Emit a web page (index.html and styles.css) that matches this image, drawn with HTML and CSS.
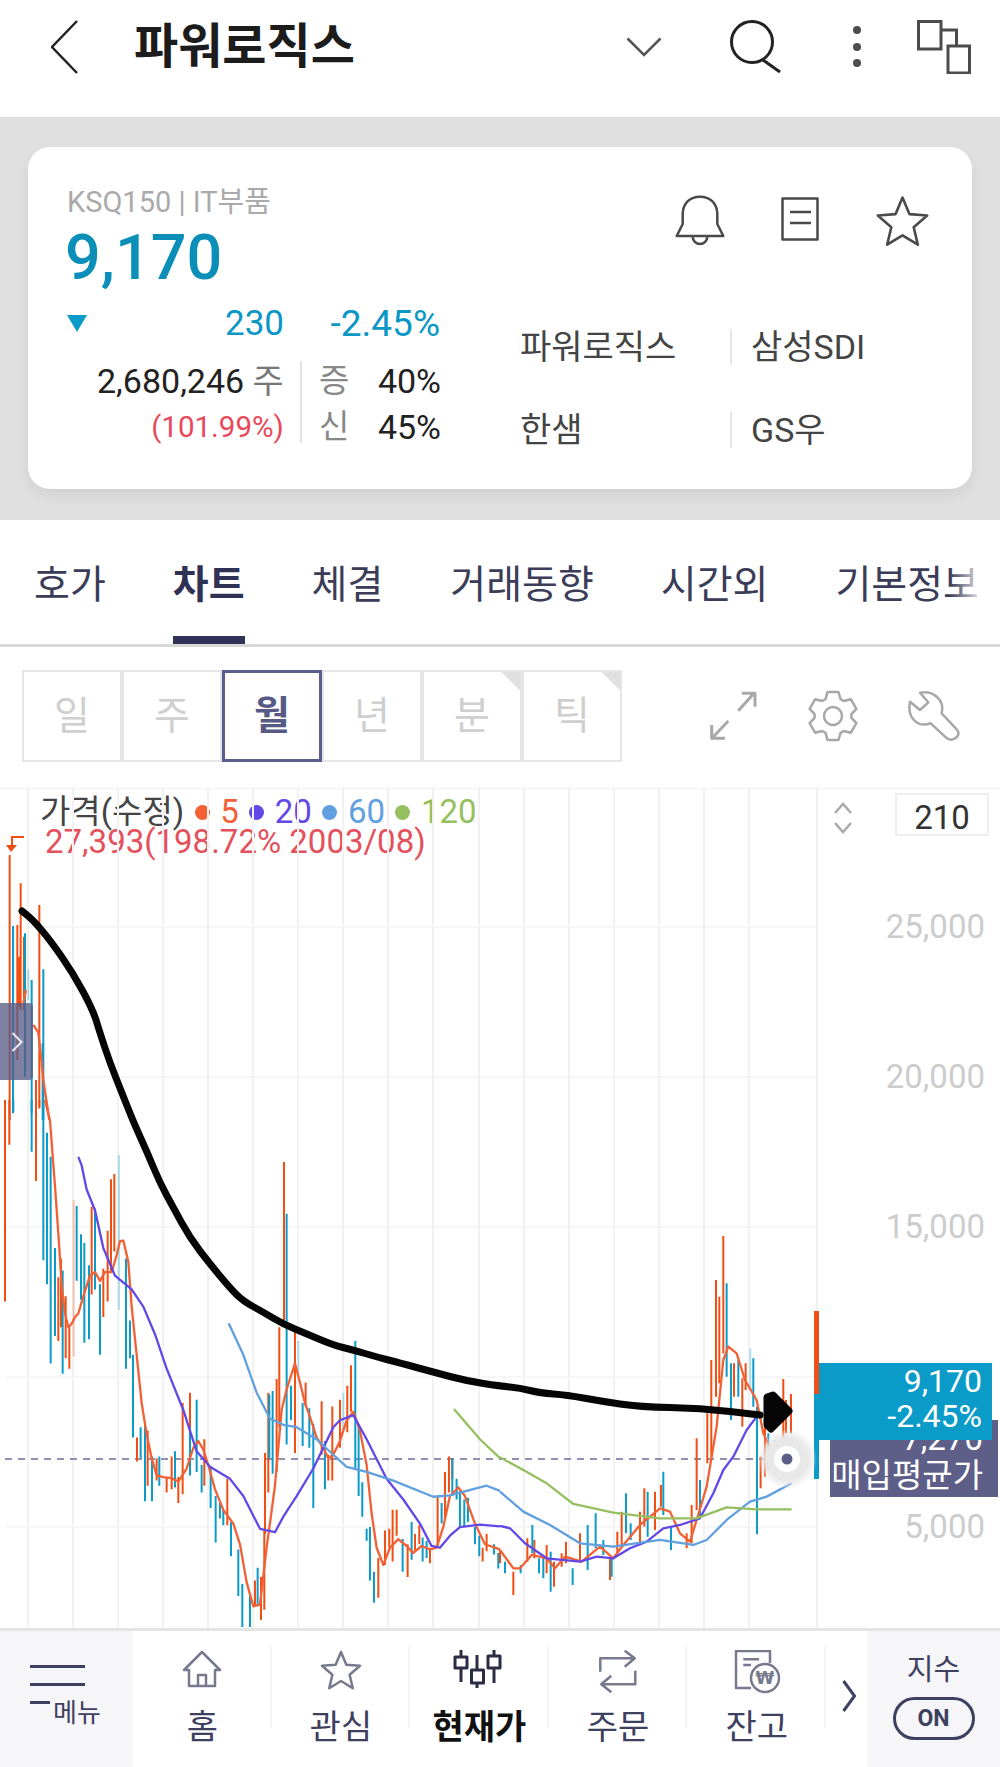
FILE: index.html
```html
<!doctype html>
<html lang="ko">
<head>
<meta charset="utf-8">
<title>파워로직스</title>
<link rel="stylesheet" href="styles.css">
</head>
<body>
<header class="top">
	<svg class="back" width="27" height="54" viewBox="0 0 27 54"><path d="M26 1L1 27L26 53"/></svg>
	<h1 class="title">파워로직스</h1>
	<svg class="ico-down" width="36" height="20" viewBox="0 0 36 20"><path d="M1.500 1.500L18 18L34.500 1.500"/></svg>
	<svg class="ico-search" width="52" height="54" viewBox="0 0 52 54"><circle cx="22" cy="22" r="20.500"/><path d="M33 40L50 52"/></svg>
	<svg class="ico-dots" width="10" height="44" viewBox="0 0 10 44"><circle cx="5" cy="5" r="4"/><circle cx="5" cy="22" r="4"/><circle cx="5" cy="38" r="4"/></svg>
	<svg class="ico-windows" width="54" height="54" viewBox="0 0 54 54"><path d="M1.500 1.500H24V29H1.500ZM24 10H39.500V26M31 26H52.500V53H31Z"/></svg>
</header>

<section class="band">
	<div class="card">
		<div class="quote">
			<div class="market">KSQ150 | IT부품</div>
			<div class="price">9,170</div>
			<div class="change">
				<span class="tri"></span>
				<span class="diff">230</span>
				<span class="pct">-2.45%</span>
			</div>
			<div class="detail">
				<div class="vol">
					<div class="vol-num">2,680,246 <em>주</em></div>
					<div class="vol-rate">(101.99%)</div>
				</div>
				<div class="margin">
					<div><em>증</em><span>40%</span></div>
					<div><em>신</em><span>45%</span></div>
				</div>
			</div>
		</div>
		<div class="side">
			<div class="actions">
				<svg class="bell" width="60" height="60" viewBox="0 0 60 60"><path d="M6.700 46L12.700 34V23.300C13.300 13 20 6.700 30 6.700S46.700 13 47.300 23.300V34L53.300 46ZM22.700 46.700a7.300 7.300 0 0 0 14.600 0"/></svg>
				<svg class="memo" width="38" height="44" viewBox="0 0 38 44"><path d="M1.500 1.500H36.500V42.500H1.500ZM9 15H30M9 26H30"/></svg>
				<svg class="fav" width="55" height="52" viewBox="9 0 42 40"><polygon points="30,2 35.300,14.700 49,15.800 38.600,24.800 41.800,38.200 30,31 18.200,38.200 21.400,24.800 11,15.800 24.700,14.700"/></svg>
			</div>
			<div class="links">
				<a>파워로직스</a><a>삼성SDI</a>
				<a>한샘</a><a>GS우</a>
			</div>
		</div>
	</div>
</section>

<nav class="tabs">
	<a>호가</a>
	<a class="on">차트</a>
	<a>체결</a>
	<a>거래동향</a>
	<a>시간외</a>
	<a>기본정보</a>
</nav>

<div class="tools">
	<div class="periods">
		<a>일</a>
		<a>주</a>
		<a class="on">월</a>
		<a>년</a>
		<a class="more">분</a>
		<a class="more">틱</a>
	</div>
	<svg class="ico-expand" width="50" height="50" viewBox="0 0 50 50"><path d="M28.300 20.700L43.300 4M31.700 3.300H45V16.700M18.300 31L3.300 46.700M1.700 35V48.300H15"/></svg>
	<svg class="ico-gear" width="56" height="56" viewBox="0 0 56 56"><path d="M20.500 11.100L22.500 4.100H33.500L35.500 11.100L38.900 13L45.900 11.300L51.400 20.800L46.400 26.100V29.900L51.400 35.200L45.900 44.700L38.900 43L35.500 44.900L33.500 51.900H22.500L20.500 44.900L17.100 43L10.100 44.700L4.600 35.200L9.600 29.900V26.100L4.600 20.800L10.100 11.300L17.100 13Z"/><circle cx="28" cy="28" r="9"/></svg>
	<svg class="ico-wrench" width="56" height="56" viewBox="0 0 56 56"><path d="M14 4.700C27.300 2 39 12 35.700 25.300L50.700 41.300C54 45.300 52.300 48.700 49 50.300C45.700 52.700 42.300 52 39 48.700L24.700 35.300C10.700 40.300 .7 28.700 4 13.700L14 22L22.300 14.300Z"/></svg>
</div>

<section class="chart">
	<div class="legend">
		<div class="legend-row">
			<span class="name">가격(수정)</span>
			<i class="dot d5"></i><span class="c5">5</span>
			<i class="dot d20"></i><span class="c20">20</span>
			<i class="dot d60"></i><span class="c60">60</span>
			<i class="dot d120"></i><span class="c120">120</span>
		</div>
		<div class="high">27,393(198.72% 2003/08)</div>
	</div>

	<svg class="plot" width="1000" height="841" viewBox="0 787 1000 841">
		<defs>
			<radialGradient id="halo"><stop offset=".7" stop-color="#e8e8e8"/><stop offset="1" stop-color="#e8e8e8" stop-opacity="0"/></radialGradient>
		</defs>
		<path class="grid-h" d="M0 788.500H1000M6 927H817M6 1077H817M6 1227H817M6 1377H817M6 1527H817"/>
		<path class="grid-v" d="M28 787V1628M73 787V1628M118 787V1628M163 787V1628M208 787V1628M253 787V1628M298 787V1628M343 787V1628M388 787V1628M433 787V1628M479 787V1628M524 787V1628M569 787V1628M614 787V1628M659 787V1628M704 787V1628M749 787V1628M817 787V1628"/>
		<path class="avg-line" d="M5 1459H790"/>

		<!-- 2003~ -->
		<g transform="translate(0 850) scale(.3333)">
			<path class="up" d="M29 15V810M62 100V480M52 225V630M72 260V480M58 320V470M118 165V770M108 690V810M15 760V810M75 420V470"/>
			<path class="down" d="M39 228V790M75 250V680M95 390V790M130 358V810M128 580V810"/>
			<path class="down faint" d="M85 358V450"/>
			<path class="ma ma5" d="M78 420L70 460M100 525L115 548L122 610L130 690L148 810"/>
		</g>

		<g transform="translate(0 1100) scale(.3333 .3444)">
			<path class="up" d="M15 0V585M28 0V130M108 0V235M118 0V25M165 430V640M175 515V700M183 460V660M197 570V750M208 660V780M275 310V565M310 490V630M323 380V585M333 230V500M343 215V440M411 980V1050M443 960V1120M470 1040V1105M500 1095V1140M515 1035V1130M535 1095V1170M548 880V1145M570 850V1060M613 985V1120M682 1100V1235M795 1025V1260M793 1250V1480M805 850V1140M830 810V1080M838 660V950M852 180V640M885 670V1025M917 820V890M965 875V1030M985 1030V1105M997 890V1105M1020 870V1010M1042 830V965M1053 770V905M1135 1330V1445M1155 1250V1350M1168 1245V1300M1178 1190V1340M1190 1190V1265M1223 1290V1385M1245 1260V1310M1258 1235V1290M1290 1300V1345M1313 1150V1295M1335 1080V1215M1347 1035V1140M1357 1040V1100M1448 1300V1340M1460 1260V1310M765 1395V1470M750 1440V1530M783 1385V1510"/>
			<path class="down" d="M40 0V35M95 0V150M130 0V465M141 95V535M152 165V765M165 430V685M188 495V795M230 308V525M243 390V580M253 415V705M267 480V695M285 315V550M300 535V740M378 460V780M390 640V750M399 740V980M422 950V1040M435 935V1165M456 1035V1165M478 1035V1120M525 1020V1125M570 950V1090M590 870V1080M605 1060V1140M632 1065V1185M647 1150V1285M660 1170V1215M670 1190V1235M693 1225V1325M715 1305V1440M727 1405V1530M750 1440V1530M773 1358V1470M808 855V1040M818 845V1085M860 330V820M860 575V1000M873 830V930M908 880V1005M928 895V1010M940 940V1185M975 990V1130M1066 700V1070M1076 950V1150M1087 1110V1210M1100 1245V1280M1110 1240V1395M1122 1370V1460M1208 1275V1370M1235 1225V1335M1268 1270V1340M1280 1280V1330M1325 1170V1230M1357 1040V1150M1370 1100V1160M1380 1135V1240M1393 1160V1240M1404 1155V1225M1425 1240V1290M1438 1265V1325M1482 1290V1320M1495 1315V1360"/>
			<path class="down faint" d="M357 160V610M895 700V800M1030 850V960"/>
			<path class="up faint" d="M221 290V745"/>
			<path class="ma ma5" d="M135 0L150 60L165 250L178 430L185 540L195 620L205 660L215 650L225 630L235 620L250 570L270 510L285 500L300 525L315 500L335 500L350 450L360 410L370 408L385 470L395 600L410 740L425 880L440 970L455 1040L470 1090L490 1095L515 1098L535 1108L560 1070L580 1010L595 990L610 1015L625 1060L645 1130L670 1190L700 1230L720 1290L740 1400L760 1470L780 1465L800 1300L825 1120L845 900L860 840L885 765L900 820L915 880L930 920L950 980L970 1010L985 1040L1000 1030L1020 990L1040 930L1060 905L1080 960L1100 1060L1115 1200L1130 1300L1150 1350L1170 1300L1195 1275L1220 1295L1240 1315L1265 1295L1290 1305L1310 1300L1330 1240L1350 1150L1375 1125L1395 1150L1425 1230L1455 1290L1500 1305"/>
			<path class="ma ma20" d="M235 165L245 190L260 260L285 320L310 430L345 510L395 550L430 600L465 680L500 780L550 900L590 1020L630 1065L690 1100L730 1150L780 1245L825 1255L850 1210L890 1150L940 1070L1000 950L1020 930L1060 915L1100 985L1160 1100L1210 1160L1260 1230L1295 1295L1320 1300L1350 1265L1380 1240L1440 1233L1500 1238"/>
			<path class="ma ma60" d="M686 648L730 740L770 850L810 925L850 943L890 950L950 985L1000 1030L1040 1065L1100 1080L1180 1105L1300 1152L1350 1148L1400 1135L1460 1120L1500 1135"/>
			<path class="ma ma120" d="M1362 897L1440 985L1500 1040"/>
		</g>

		<g transform="translate(500 1200) scale(.3333)">
			<path class="up" d="M0 1050V1090M40 1115V1185M82 1015V1085M103 1020V1075M140 1035V1120M162 1085V1160M185 1060V1100M198 1025V1090M240 1000V1085M330 1075V1140M352 995V1060M365 935V1040M420 935V1030M433 865V980M465 875V990M483 855V920M560 1000V1045M575 915V1030M590 715V930M622 640V790M634 480V770M648 240V590M658 290V550M670 108V460M702 490V590M727 535V680M737 490V570M782 770V865M795 660V830M850 537V830M873 582V700M858 600V700"/>
			<path class="down" d="M15 1085V1120M62 1095V1120M97 975V1060M117 1075V1120M130 1070V1135M152 1055V1175M218 1105V1155M263 975V1110M287 940V1045M310 1020V1065M335 1075V1130M378 880V1000M392 970V1020M443 875V1010M490 815V945M513 980V1050M600 840V950M680 250V530M693 490V660M715 480V590M760 475V620M771 620V1003M805 700V810M825 720V790M840 790V840"/>
			<path class="down faint" d="M751 445V570"/>
			<path class="ma ma5" d="M0 1050L40 1105L60 1105L95 1065L140 1075L165 1105L195 1070L245 1085L300 1040L340 1075L370 1035L420 975L480 925L510 935L540 1000L570 1025L590 960L620 860L650 680L670 480L685 440L710 460L735 540L770 600L790 700L830 790L875 715"/>
			<path class="ma ma20" d="M0 978L30 985L75 1030L140 1075L240 1085L290 1070L340 1075L390 1045L440 1025L490 985L540 975L600 955L640 880L670 810L700 770L740 690L770 650"/>
			<path class="ma ma60" d="M0 875L70 935L150 975L240 1030L340 1040L480 1020L580 1035L620 1020L680 960L750 905L800 890L875 850"/>
			<path class="ma ma120" d="M0 772L70 810L140 850L220 912L340 938L480 955L590 955L680 922L770 928L875 928"/>
		</g>

		<!-- pen mark over the chart -->
		<path class="pen" d="M22 911L27.500 915.500Q33 920 41.500 930Q50 940 61.500 956.500Q73 973 83 991.500Q93 1010 96.500 1021.500Q100 1033 105 1048Q110 1063 116 1078Q122 1093 127.500 1107Q133 1121 140 1136.500Q147 1152 153.500 1167.500Q160 1183 166.500 1195Q173 1207 181.500 1222.500Q190 1238 200 1251Q210 1264 220 1276Q230 1288 236.500 1294.500Q243 1301 253 1306.500Q263 1312 273 1318Q283 1324 295 1329Q307 1334 320 1339.500Q333 1345 343 1347.500Q353 1350 365 1353.500Q377 1357 388.500 1360Q400 1363 416.500 1367.500Q433 1372 450 1376.500Q467 1381 483.500 1383.500Q500 1386 510 1387Q520 1388 530 1390.500Q540 1393 553.500 1394Q567 1395 583.500 1398Q600 1401 620 1404Q640 1407 670 1407.500Q700 1408 730 1411.500L760 1415"/>
		<path class="pen-head" d="M767 1397L773 1395L789 1411L771 1429L767 1425Z"/>

		<path class="flag" d="M24 837H12V846"/>
		<path class="flag-tip" d="M6 845H17L11 852Z"/>
		<path class="bar-up" d="M814 1311h5v83h-5z"/>
		<path class="bar-down" d="M814 1394h5v85h-5z"/>
		<circle cx="787" cy="1459" r="30" fill="url(#halo)"/>
		<circle cx="787" cy="1459" r="13" fill="#fff"/>
		<circle cx="787" cy="1459" r="5.500" fill="#5e5f88"/>
		<path class="scroll-arrows" d="M835 813l8-9 8 9M835 823l8 9 8-9"/>
	</svg>

	<div class="drawer"><svg width="12" height="20" viewBox="0 0 12 20"><path d="M1.500 1L10.500 10L1.500 19"/></svg></div>
	<div class="zoom-box">210</div>
	<div class="axis">
		<div>25,000</div>
		<div>20,000</div>
		<div>15,000</div>
		<div></div>
		<div>5,000</div>
	</div>
	<div class="tag-avg">7,270<br>매입평균가</div>
	<div class="tag-now">9,170<br>-2.45%</div>
</section>

<footer class="nav">
	<div class="nav-menu">
		<i class="line"></i>
		<i class="line"></i>
		<div class="menu-row"><i class="line short"></i><span>메뉴</span></div>
	</div>
	<div class="nav-main">
		<a class="item">
			<svg width="60" height="50" viewBox="0 0 60 50"><path d="M17 36V20H12L30 2L48 20H43V36ZM26 36V25H34V36"/></svg>
			<span>홈</span>
		</a>
		<a class="item">
			<svg width="60" height="50" viewBox="0 0 60 50"><polygon points="30,2 35.300,14.700 49,15.800 38.600,24.800 41.800,38.200 30,31 18.200,38.200 21.400,24.800 11,15.800 24.700,14.700"/></svg>
			<span>관심</span>
		</a>
		<a class="item on">
			<svg width="60" height="50" viewBox="0 0 60 50"><path d="M12 0V7M12 18V32M6 7H18V18H6ZM28 5V20M28 33V38M22.500 20H34.500V33H22.500ZM45 0V6M45 18V33M39 6H51V18H39Z"/></svg>
			<span>현재가</span>
		</a>
		<a class="item">
			<svg width="60" height="50" viewBox="0 0 60 50"><path d="M12.300 21.700V8.300H46.700M36.700 .7L46.700 8.300L36.700 16.700M47.300 20.700V34.300H13.300M23.300 25.700L13.300 34.300L23.300 42.300"/></svg>
			<span>주문</span>
		</a>
		<a class="item">
			<svg width="60" height="50" viewBox="0 0 60 50"><path d="M43 13V1H9V38H24M16.300 9.300H32M16.300 15H24"/><circle cx="38" cy="28" r="14"/><text class="won" x="38" y="34">₩</text></svg>
			<span>잔고</span>
		</a>
		<svg class="nav-next" width="14" height="32" viewBox="0 0 14 32"><path d="M1.500 1L12.500 16L1.500 31"/></svg>
	</div>
	<div class="nav-index">
		<div class="index-name">지수</div>
		<div class="pill">ON</div>
	</div>
</footer>
</body>
</html>
```

FILE: styles.css
```css
*{box-sizing:border-box;margin:0;padding:0;}
html,body{width:1000px;height:1767px;overflow:hidden;background:#fff;}
body{font-family:Roboto,"Noto Sans CJK KR",sans-serif;color:#222;}
em,i{font-style:normal;}
svg{display:block;fill:none;}

/* top bar */
.top{height:117px;padding:0 29px 23px 51px;display:flex;align-items:center;}
.top svg{flex:none;}
.back path{stroke:#222;stroke-width:2.5;}
.title{font-size:48px;line-height:60px;font-weight:700;color:#1c1c1c;margin-left:56px;white-space:nowrap;}
.ico-down{margin-left:auto;}
.ico-down path{stroke:#555;stroke-width:2.5;}
.ico-search{margin-left:68px;}
.ico-search circle,.ico-search path{stroke:#222;stroke-width:3;}
.ico-dots{margin-left:70px;fill:#4c4c4c;}
.ico-windows{margin-left:55px;}
.ico-windows path{stroke:#4c4c4c;stroke-width:3;}

/* quote card */
.band{height:403px;background:#e0e0e0;padding:30px 28px 31px;}
.card{height:342px;background:#fff;border-radius:22px;box-shadow:0 6px 14px rgba(0,0,0,.07);display:flex;}
.quote{width:413px;padding:38px 0 0 39px;flex:none;}
.market{font-size:29px;line-height:34px;color:#aaa;}
.price{font-size:63px;line-height:70px;font-weight:500;color:#0b8fb8;margin:4px 0 0 -2px;}
.change{display:flex;align-items:center;height:40px;margin-top:10px;color:#0b97c6;}
.tri{width:0;height:0;border-style:solid;border-width:17px 10.500px 0;border-color:#0b9bc9 transparent transparent;flex:none;}
.diff{width:197px;text-align:right;font-size:35px;}
.pct{width:156px;text-align:right;font-size:37px;}
.detail{display:flex;margin-top:18px;}
.vol{width:236px;padding-right:16px;text-align:right;border-right:2px solid #e2e2e2;height:82px;}
.vol-num{font-size:34px;line-height:40px;color:#222;white-space:nowrap;}
.vol-num em{color:#777;}
.vol-rate{font-size:29.500px;line-height:52px;color:#e8485a;}
.margin{font-size:34px;padding-left:17px;}
.margin div{display:flex;line-height:52px;}
.margin div:first-child{line-height:40px;}
.margin em{width:59px;color:#888;font-size:33px;}
.side{flex:1;}
.actions{display:flex;padding:43px 0 0 229px;height:103px;}
.actions path,.actions polygon{stroke:#4a4a4a;stroke-width:2.500;stroke-linejoin:round;}
.actions .fav polygon{stroke-width:2;}
.memo{margin:7px 0 0 51px;flex:none;}
.fav{margin:5px 0 0 56px;flex:none;}
.bell{flex:none;}
.links{display:grid;grid-template-columns:212px 1fr;grid-auto-rows:36px;row-gap:47px;margin:79px 0 0 79px;font-size:34px;line-height:36px;color:#444;}
.links a:nth-child(odd){border-right:2px solid #e6e6e6;}
.links a:nth-child(even){padding-left:19px;}

/* tabs */
.tabs{height:127px;border-bottom:3px solid #d9d9d9;padding-left:34px;display:flex;gap:67px;position:relative;overflow:hidden;white-space:nowrap;font-size:39px;line-height:130px;color:#3b3d58;}
.tabs a{flex:none;height:124px;}
.tabs .on{font-weight:700;color:#2f3254;border-bottom:8px solid #2f3357;}
.tabs::after{content:"";position:absolute;right:0;top:0;width:50px;height:120px;background:linear-gradient(to right,rgba(255,255,255,0),#fff 70%);}

/* period buttons */
.tools{height:140px;padding:23px 0 0 22px;display:flex;}
.tools svg{flex:none;}
.periods{display:flex;height:92px;flex:none;}
.periods a{width:100px;border:2px solid #e6e6e6;text-align:center;font-size:39px;line-height:88px;color:#cfcfcf;}
.periods .on{border:3px solid #5b5f8a;font-weight:700;color:#565a85;line-height:86px;}
.periods .more{background:linear-gradient(225deg,#e0e0e0 13px,transparent 13px);}
.ico-expand,.ico-gear,.ico-wrench{margin-top:20px;stroke:#a8a8a8;stroke-width:3;stroke-linejoin:round;}
.ico-expand{margin-left:88px;}
.ico-gear{margin:18px 0 0 45px;stroke-width:2.500;}
.ico-wrench{margin:18px 0 0 45px;stroke-width:2.500;}

/* chart */
.chart{height:841px;position:relative;overflow:hidden;}
.legend{position:absolute;left:40px;top:7px;font-size:33px;line-height:32px;white-space:nowrap;}
.legend-row{display:flex;align-items:center;height:32px;padding-top:4px;}
.name{color:#444;}
.dot{width:15px;height:15px;border-radius:50%;margin:0 10.500px;}
.d5{background:#f26035;}
.d20{background:#6248e6;}
.d60{background:#60a0e0;}
.d120{background:#96bf60;}
.c5{color:#f26035;}
.c20{color:#6248e6;}
.c60{color:#60a0e0;}
.c120{color:#96bf60;}
.high{color:#e4505c;margin-left:5px;height:32px;}
.plot{position:absolute;left:0;top:0;}
.plot path{vector-effect:non-scaling-stroke;}
.grid-h{stroke:#f6f6f6;stroke-width:2;}
.grid-v{stroke:#f2f2f2;stroke-width:2;}
.avg-line{stroke:#6c6c9c;stroke-width:1.500;stroke-dasharray:7 6;}
.up{stroke:#f04e12;stroke-width:2;}
.down{stroke:#0b9bc9;stroke-width:2;}
.faint{opacity:.3;}
.ma{stroke-width:2.300;stroke-linejoin:round;}
.ma5{stroke:#f26035;}
.ma20{stroke:#6248e6;}
.ma60{stroke:#60a0e0;}
.ma120{stroke:#96bf60;}
.pen{stroke:#050505;stroke-width:7;stroke-linecap:round;stroke-linejoin:round;}
.pen-head{fill:#050505;stroke:#050505;stroke-width:7;stroke-linejoin:round;}
.flag{stroke:#f04e12;stroke-width:2;}
.flag-tip{fill:#f04e12;}
.bar-up{fill:#f04e12;}
.bar-down{fill:#0b9bc9;}
.scroll-arrows{stroke:#aaa;stroke-width:2.500;}
.drawer{position:absolute;left:0;top:216px;width:33px;height:77px;border-radius:0 4px 4px 0;background:rgba(90,93,135,.78);display:flex;align-items:center;justify-content:center;}
.drawer path{stroke:#e8e8ee;stroke-width:2;}
.zoom-box{position:absolute;left:895px;top:6px;width:94px;height:43px;border:2px solid #eee;text-align:center;font-size:33px;line-height:45px;color:#333;}
.axis{position:absolute;right:15px;top:65px;text-align:right;font-size:33px;line-height:150px;color:#ccc;}
.axis div{height:150px;}
.tag-avg{position:absolute;left:830px;top:633px;width:168px;height:77px;padding-right:15px;background:#5e5f88;color:#fff;text-align:right;font-size:33px;line-height:37px;white-space:nowrap;}
.tag-now{position:absolute;left:819px;top:576px;width:173px;height:77px;padding:1px 10px 0 0;background:#0b9bc9;color:#fff;text-align:right;font-size:32px;line-height:35px;}

/* bottom menu */
.nav{height:139px;border-top:3px solid #e5e5e5;display:flex;}
.nav-menu{width:133px;background:#f6f6f8;padding:34px 0 0 30px;}
.line{display:block;width:55px;height:3px;background:#3e4060;margin-bottom:15px;}
.menu-row{display:flex;}
.line.short{width:20px;}
.menu-row span{font-size:26px;line-height:24px;color:#3e4060;margin-left:3px;}
.nav-main{flex:1;display:flex;}
.item{width:138.600px;position:relative;flex:none;display:flex;flex-direction:column;align-items:center;padding-top:19px;font-size:34px;color:#3e4060;}
.item::after{content:"";position:absolute;right:0;top:16px;width:2px;height:81px;background:#f3f3f3;}
.item span{line-height:44px;margin-top:5px;white-space:nowrap;}
.item svg path,.item svg polygon,.item svg circle{stroke:#777a8e;stroke-width:2.500;stroke-linejoin:round;}
.item.on{color:#111;font-weight:700;}
.item.on svg path{stroke:#2b2c45;stroke-width:3;}
.won{fill:#777a8e;font-size:17px;font-weight:700;text-anchor:middle;font-family:"DejaVu Sans",sans-serif;}
.nav-next{margin:49px 0 0 16px;flex:none;}
.nav-next path{stroke:#3e4060;stroke-width:3;}
.nav-index{width:133px;background:#f6f6f8;display:flex;flex-direction:column;align-items:center;padding-top:22px;color:#3e4060;}
.index-name{font-size:29px;line-height:34px;}
.pill{width:82px;height:43px;margin-top:10px;border:3px solid #3e4060;border-radius:22px;text-align:center;font-size:23px;font-weight:700;line-height:37px;}
```
